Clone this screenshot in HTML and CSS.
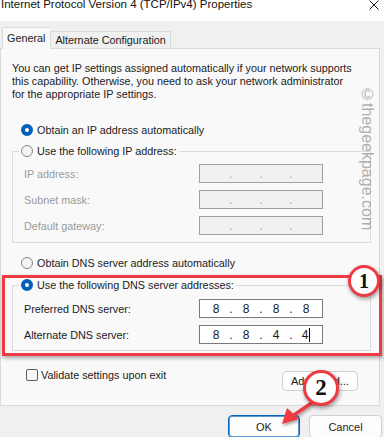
FILE: index.html
```html
<!DOCTYPE html>
<html>
<head>
<meta charset="utf-8">
<link rel="stylesheet" href="styles.css">
</head>
<body>
<div class="window">
  <div class="titlebar">
    <span class="title">Internet Protocol Version 4 (TCP/IPv4) Properties</span>
    <svg class="close" viewBox="0 0 10 10" width="10" height="10"><path d="M0.5 0.5 L9.5 9.5 M9.5 0.5 L0.5 9.5" stroke="#1a1a1a" stroke-width="1" fill="none"/></svg>
  </div>
  <div class="tabs">
    <div class="tab active">General</div>
    <div class="tab">Alternate Configuration</div>
  </div>
  <div class="panel">
    <p class="intro">You can get IP settings assigned automatically if your network supports<br>this capability. Otherwise, you need to ask your network administrator<br>for the appropriate IP settings.</p>
    <div class="opt opt-top"><span class="radio on"></span>Obtain an IP address automatically</div>
    <fieldset class="group ip">
      <legend class="opt"><span class="radio"></span>Use the following IP address:</legend>
      <div class="field disabled"><span class="label">IP address:</span><div class="ipbox off"><span class="seg"></span><span class="dot">.</span><span class="seg"></span><span class="dot">.</span><span class="seg"></span><span class="dot">.</span><span class="seg"></span></div></div>
      <div class="field disabled"><span class="label">Subnet mask:</span><div class="ipbox off"><span class="seg"></span><span class="dot">.</span><span class="seg"></span><span class="dot">.</span><span class="seg"></span><span class="dot">.</span><span class="seg"></span></div></div>
      <div class="field disabled"><span class="label">Default gateway:</span><div class="ipbox off"><span class="seg"></span><span class="dot">.</span><span class="seg"></span><span class="dot">.</span><span class="seg"></span><span class="dot">.</span><span class="seg"></span></div></div>
    </fieldset>
    <div class="opt opt-mid"><span class="radio"></span>Obtain DNS server address automatically</div>
    <fieldset class="group dns">
      <legend class="opt"><span class="radio on"></span>Use the following DNS server addresses:</legend>
      <div class="field"><span class="label">Preferred DNS server:</span><div class="ipbox"><span class="seg">8</span><span class="dot">.</span><span class="seg">8</span><span class="dot">.</span><span class="seg">8</span><span class="dot">.</span><span class="seg">8</span></div></div>
      <div class="field"><span class="label">Alternate DNS server:</span><div class="ipbox"><span class="seg">8</span><span class="dot">.</span><span class="seg">8</span><span class="dot">.</span><span class="seg">4</span><span class="dot">.</span><span class="seg">4<span class="caret"></span></span></div></div>
    </fieldset>
    <div class="footer-row">
      <label class="check"><span class="box"></span>Validate settings upon exit</label>
      <button class="btn adv">Advanced...</button>
    </div>
    <div class="watermark">©thegeekpage.com</div>
  </div>
  <div class="actions">
    <button class="btn primary">OK</button>
    <button class="btn cancel">Cancel</button>
  </div>
</div>
<div class="highlight"></div>
<div class="badge b1">1</div>
<svg class="arrow" viewBox="0 0 384 437" width="384" height="437">
  <g filter="url(#sh)">
    <path d="M313 402 L291 417" stroke="#ee3a43" stroke-width="3.5" stroke-linecap="round" fill="none"/>
    <polygon points="282,424 287,408 299,419" fill="#ee3a43"/>
  </g>
  <defs>
    <filter id="sh" x="-50%" y="-50%" width="200%" height="200%">
      <feDropShadow dx="1" dy="2" stdDeviation="1.5" flood-color="#000" flood-opacity="0.35"/>
    </filter>
  </defs>
</svg>
<div class="badge b2">2</div>
</body>
</html>
```
FILE: styles.css
```css
* { box-sizing: border-box; }
html, body { margin: 0; padding: 0; }
body {
  width: 384px;
  height: 437px;
  overflow: hidden;
  background: #f0f0f0;
  font-family: "Liberation Sans", Arial, sans-serif;
  font-size: 10.8px;
  color: #1b1b1b;
  position: relative;
}
.titlebar {
  height: 21px;
  background: #ffffff;
  display: flex;
  justify-content: space-between;
  align-items: flex-start;
  padding: 0 5px 0 1px;
}
.title { font-size: 11.5px; line-height: 12px; margin-top: -2px; color: #111; }
.close { display: block; }

.tabs {
  display: flex;
  align-items: flex-end;
  height: 21px;
  margin-top: 6px;
  padding-left: 2px;
}
.tab {
  height: 17px;
  line-height: 16px;
  padding: 0 4px;
  border: 1px solid #dadada;
  border-bottom: none;
  background: #f0f0f0;
}
.tab.active {
  height: 22px;
  line-height: 20px;
  margin-bottom: -1px;
  padding: 0 5px 0 4px;
  background: #f9f9f9;
  border-right: none;
  position: relative;
  z-index: 1;
}

.panel {
  width: 380px;
  height: 358px;
  border: 1px solid #dadada;
  background: #f9f9f9;
  position: relative;
}
.intro {
  margin: 0;
  padding: 13px 0 0 11px;
  line-height: 13px;
}
.opt {
  display: flex;
  align-items: center;
  gap: 4px;
  height: 16px;
}
.opt-top { margin: 21px 0 0 20px; }
.opt-mid { margin: 12px 0 0 20px; }
.radio {
  width: 12px;
  height: 12px;
  border-radius: 50%;
  border: 1px solid #858585;
  background: #f5f5f5;
  flex: none;
}
.radio.on {
  border: 4px solid #005fb8;
  background: #ffffff;
}
.group {
  margin: 5px 8px 0 11px;
  padding: 0 0 7px 11px;
  border: 1px solid #dcdcdc;
  min-width: 0;
}
.group.dns { margin-top: 6px; padding-bottom: 6px; }
.group legend {
  padding: 0 2px;
  margin-left: -5px;
}
.field {
  display: grid;
  grid-template-columns: 175px 124px;
  align-items: center;
  height: 19px;
  margin-top: 7px;
}
.group legend + .field { margin-top: 5px; }
.dns legend + .field { margin-top: 6px; }
.field.disabled .label { color: #9a9a9a; }
.ipbox {
  height: 19px;
  border: 1px solid #7a7a7a;
  background: #ffffff;
  display: flex;
  align-items: center;
  padding-left: 4px;
  font-size: 12px;
}
.ipbox.off { background: #f0f0f0; border-color: #a0a0a0; color: #a0a0a0; }
.seg { width: 24px; text-align: center; }
.dot { width: 6px; text-align: center; }
.caret {
  display: inline-block;
  width: 1px;
  height: 14px;
  background: #000;
  vertical-align: -3px;
  margin-left: 1px;
}
.footer-row {
  display: flex;
  justify-content: space-between;
  align-items: flex-start;
  margin: 17px 21px 0 25px;
}
.check { display: flex; align-items: center; gap: 3px; height: 14px; }
.box {
  width: 12px;
  height: 12px;
  border: 1px solid #5f5f5f;
  border-radius: 2px;
  background: #f6f6f6;
}
.btn {
  font-family: inherit;
  font-size: 11px;
  color: #1b1b1b;
  background: #fdfdfd;
  border: 1px solid #d0d0d0;
  border-radius: 4px;
  padding: 0;
}
.adv { width: 76px; height: 20px; margin-top: 3px; }
.watermark {
  position: absolute;
  left: 358px;
  top: 37px;
  writing-mode: vertical-rl;
  font-size: 16px;
  line-height: 16px;
  color: rgba(110, 110, 110, 0.55);
}
.actions {
  display: flex;
  justify-content: flex-end;
  gap: 9px;
  padding-right: 2px;
  margin-top: 9px;
}
.primary { width: 72px; height: 23px; border: 1px solid #0067c0; box-shadow: inset 0 0 0 1px #5c9ad6; }
.cancel { width: 73px; height: 23px; }

.highlight {
  position: absolute;
  left: 2px;
  top: 275px;
  width: 380px;
  height: 81px;
  border: 3px solid #ee3a43;
  box-shadow: 1px 2px 4px rgba(0, 0, 0, 0.35);
}
.badge {
  position: absolute;
  border-radius: 50%;
  border: 3px solid #ee3a43;
  background: #ffffff;
  display: flex;
  align-items: center;
  justify-content: center;
  font-family: "Liberation Serif", "Times New Roman", serif;
  font-weight: bold;
  color: #111;
  box-shadow: 1px 2px 4px rgba(0, 0, 0, 0.4);
}
.b1 { left: 348px; top: 265px; width: 32px; height: 32px; font-size: 20px; }
.b2 { left: 303px; top: 370px; width: 36px; height: 36px; font-size: 23px; }
.arrow { position: absolute; left: 0; top: 0; pointer-events: none; }
```
